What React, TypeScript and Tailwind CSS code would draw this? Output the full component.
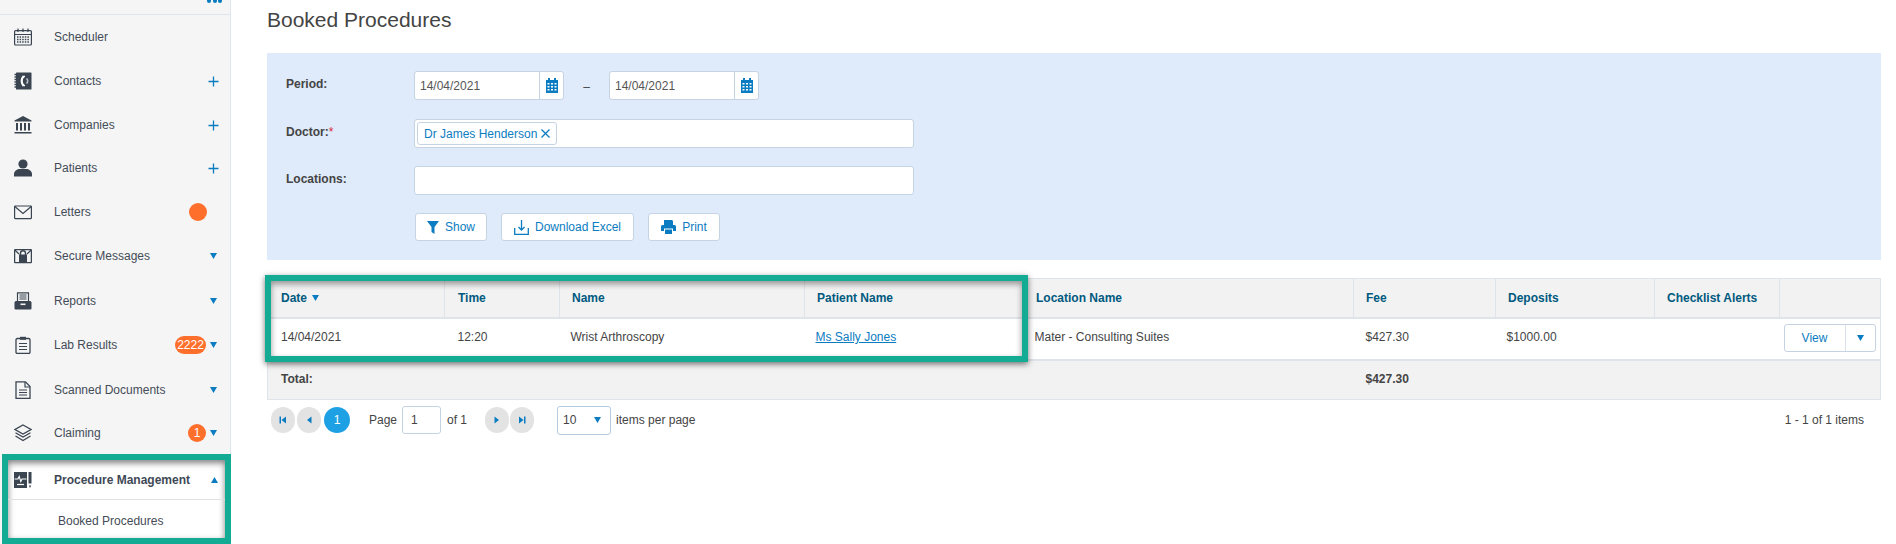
import type { ReactNode } from 'react'

const dark = '#3b4552'
const blue = '#0b7cc1'

function Svg({ children }: { children: ReactNode }) {
  return (
    <svg width="18" height="18" viewBox="0 0 18 18" fill="none" stroke={dark} strokeWidth="1.2">
      {children}
    </svg>
  )
}

const CalendarIcon = () => (
  <Svg>
    <rect x="0.6" y="2.6" width="16.8" height="14.4" rx="1" />
    <path d="M0.6 6.5h16.8M4 0.5v3.5M9 0.5v3.5M14 0.5v3.5" />
    <path strokeWidth="1.4" strokeDasharray="1.5 1.1" d="M3 9h12M3 11.5h12M3 14h12" />
  </Svg>
)

const ContactsIcon = () => (
  <Svg>
    <rect x="2" y="0.5" width="15.5" height="17" rx="0.5" fill={dark} stroke="none" />
    <path stroke={dark} strokeWidth="1.3" d="M0.5 2.5h3M0.5 5h3M0.5 7.5h3M0.5 10h3M0.5 12.5h3M0.5 15h3" />
    <path stroke="#fff" strokeWidth="2.2" d="M9.5 4.5c-2.4 2-2.4 7 0 9" />
    <path stroke="#fff" strokeWidth="1.6" d="M8.5 4.5h2.5M8.5 13.5h2.5" />
    <path stroke="#b9bec6" strokeWidth="1.6" d="M12.5 6.5c1.6 1 1.6 4 0 5" />
  </Svg>
)

const BankIcon = () => (
  <svg width="18" height="18" viewBox="0 0 18 18" fill={dark}>
    <path d="M9 0 L17.5 4.5 V5.5 H0.5 V4.5 Z" />
    <path d="M2 7h2v7.5h-2zM6 7h2v7.5h-2zM10 7h2v7.5h-2zM14 7h2v7.5h-2z" />
    <path d="M0.5 16h17v1.5h-17z" />
  </svg>
)

const PersonIcon = () => (
  <svg width="18" height="18" viewBox="0 0 18 18" fill={dark}>
    <circle cx="9" cy="5" r="4.6" />
    <path d="M0 17.5v-2.5c0-3 3.2-5 6-5h6c2.8 0 6 2 6 5v2.5z" />
  </svg>
)

const MailIcon = () => (
  <Svg>
    <rect x="0.6" y="3" width="16.8" height="12.6" rx="0.5" />
    <path d="M0.8 3.5 L9 10.5 L17.2 3.5" />
  </Svg>
)

const SecureMailIcon = () => (
  <Svg>
    <rect x="0.6" y="2.6" width="16.8" height="13" rx="0.5" strokeWidth="1.3" />
    <path d="M0.8 3 L5 7M17.2 3 L13 7" />
    <rect x="5" y="7.5" width="8" height="7.5" fill={dark} stroke="none" />
    <path d="M6.5 8V6.2a2.5 2.5 0 0 1 5 0V8" strokeWidth="1.4" />
  </Svg>
)

const ReportsIcon = () => (
  <svg width="18" height="18" viewBox="0 0 18 18" fill="none" stroke={dark}>
    <path strokeWidth="1.2" d="M3.5 9V0.8h11V9" />
    <path strokeWidth="1" d="M5.5 3h7M5.5 5h7M5.5 7h7" />
    <path fill={dark} stroke="none" d="M1.5 9h15l1 1.5V16.5a1 1 0 0 1-1 1h-15a1 1 0 0 1-1-1V10.5z" />
    <rect x="6.5" y="11.5" width="5" height="1.6" fill="#f5f5f5" stroke="none" />
  </svg>
)

const ClipboardIcon = () => (
  <Svg>
    <rect x="2" y="2.5" width="14" height="15" rx="1.2" strokeWidth="1.3" />
    <rect x="6" y="0.8" width="6" height="3" fill={dark} stroke="none" />
    <path d="M5 7.5h8M5 10.5h8M5 13.5h8" />
  </Svg>
)

const DocumentIcon = () => (
  <Svg>
    <path strokeWidth="1.3" d="M2 0.8h9.5L16 5.5v12H2z" />
    <path d="M11 1v5h5M5 9h8M5 11.5h8M5 14h8" />
  </Svg>
)

const LayersIcon = () => (
  <Svg>
    <path strokeWidth="1.3" d="M9 1 L17 5.5 L9 10 L1 5.5z" />
    <path strokeWidth="1.3" d="M1.5 8.8 L9 13 L16.5 8.8M1.5 12 L9 16.5 L16.5 12" />
  </Svg>
)

const ProcedureIcon = () => (
  <svg width="18" height="18" viewBox="0 0 18 18" fill="none">
    <rect x="0" y="1" width="13" height="16" fill={dark} />
    <path stroke="#fff" strokeWidth="1.1" d="M0.5 8h3.5l1.2-2.5 1.6 5 1.2-2.5h4.5" />
    <path stroke="#fff" strokeWidth="1.2" d="M3 13.5h7" />
    <path fill={dark} d="M14.5 1h3v11.5h-3zM14.8 14.5h2.4l-1.2 2.5z" />
  </svg>
)

const Plus = () => (
  <svg width="11" height="11" viewBox="0 0 11 11" stroke={blue} strokeWidth="1.3">
    <path d="M5.5 0.5v10M0.5 5.5h10" />
  </svg>
)

const Down = ({ className = '' }: { className?: string }) => (
  <svg width="7" height="6" viewBox="0 0 7 6" fill={blue} className={className}>
    <path d="M0 0h7L3.5 6z" />
  </svg>
)

const navItems = [
  { label: 'Scheduler', icon: <CalendarIcon />, height: 'h-[44px]' },
  { label: 'Contacts', icon: <ContactsIcon />, height: 'h-[44px]', plus: true },
  { label: 'Companies', icon: <BankIcon />, height: 'h-[44px]', plus: true },
  { label: 'Patients', icon: <PersonIcon />, height: 'h-[42px]', plus: true },
  { label: 'Letters', icon: <MailIcon />, height: 'h-[45px]', dot: true },
  { label: 'Secure Messages', icon: <SecureMailIcon />, height: 'h-[44px]', arrow: true },
  { label: 'Reports', icon: <ReportsIcon />, height: 'h-[45px]', arrow: true },
  { label: 'Lab Results', icon: <ClipboardIcon />, height: 'h-[44px]', arrow: true, badge: '2222' },
  { label: 'Scanned Documents', icon: <DocumentIcon />, height: 'h-[45px]', arrow: true },
  { label: 'Claiming', icon: <LayersIcon />, height: 'h-[42px]', arrow: true, badge: '1' },
]

function Sidebar() {
  return (
    <aside className="w-[231px] h-[544px] shrink-0 bg-[#f5f5f5] border-r border-[#dfe5ec]">
      <div className="h-[15px] border-b border-[#dfe5ec] flex justify-end items-start gap-[1.5px] pr-[8px]">
        <span className="w-[4px] h-[3px] rounded-b-full bg-[#0b7cc1]" />
        <span className="w-[4px] h-[3px] rounded-b-full bg-[#0b7cc1]" />
        <span className="w-[4px] h-[3px] rounded-b-full bg-[#0b7cc1]" />
      </div>
      {navItems.map((item) => (
        <div key={item.label} className={`${item.height} flex items-center pl-[14px] text-[#444c58]`}>
          <span className="w-[40px] flex">{item.icon}</span>
          <span>{item.label}</span>
          <span className="ml-auto flex items-center pr-[11px]">
            {item.dot && <span className="w-[18px] h-[18px] rounded-full bg-[#ff6f2c] mr-[12px]" />}
            {item.badge && (
              <span
                className={`h-[18px] rounded-full bg-[#ff6f2c] text-white flex items-center justify-center ${
                  item.badge === '1' ? 'w-[18px]' : 'w-[31px]'
                }`}
              >
                {item.badge}
              </span>
            )}
            {item.plus && <Plus />}
            {item.arrow && <Down className="ml-[4px] mr-[2px]" />}
          </span>
        </div>
      ))}
      {/* highlighted menu group */}
      <div className="ml-[2px] w-[229px] h-[90px] border-[6px] border-[#13ab94] bg-white shadow-[inset_0_3px_6px_rgba(0,0,0,0.5)]">
        <div className="h-[40px] flex items-center pl-[6px] border-b border-[#e1e1e1] text-[#3f4956] font-bold">
          <span className="w-[40px] flex">
            <ProcedureIcon />
          </span>
          <span>Procedure Management</span>
          <svg width="7" height="6" viewBox="0 0 7 6" fill={blue} className="ml-auto mr-[7px]">
            <path d="M0 6h7L3.5 0z" />
          </svg>
        </div>
        <div className="h-[38px] flex items-center pl-[50px] pt-[3px] text-[#444c58]">Booked Procedures</div>
      </div>
    </aside>
  )
}

const CalendarSmall = () => (
  <svg width="12" height="15" viewBox="0 0 12 15" fill={blue}>
    <path d="M2 0h2v2h4V0h2v2h2v13H0V2h2z" />
    <path
      fill="#fff"
      d="M1.5 5h2v1.6h-2zM5 5h2v1.6H5zM8.5 5h2v1.6h-2zM1.5 8h2v1.6h-2zM5 8h2v1.6H5zM8.5 8h2v1.6h-2zM1.5 11h2v1.6h-2zM5 11h2v1.6H5zM8.5 11h2v1.6h-2z"
    />
  </svg>
)

function DateField({ value }: { value: string }) {
  return (
    <div className="w-[150px] h-[29px] flex bg-white border border-[#c5d3e2] rounded-[3px]">
      <input
        readOnly
        defaultValue={value}
        className="w-[125px] pl-[5px] text-[#555] outline-none border-r border-[#c5d3e2] bg-transparent"
      />
      <span className="flex-1 flex items-center justify-center">
        <CalendarSmall />
      </span>
    </div>
  )
}

function FilterButton({ icon, label, width }: { icon: ReactNode; label: string; width: string }) {
  return (
    <button className={`${width} h-[28px] flex items-center justify-center gap-[6px] bg-white border border-[#c5d3e2] rounded-[3px] text-[#0b7cc1]`}>
      {icon}
      {label}
    </button>
  )
}

function FilterPanel() {
  return (
    <section className="h-[207px] bg-[#dfeafa] pt-[18px] pl-[19px]">
      <div className="grid grid-cols-[128px_1fr] grid-rows-[30px_29px_29px_28px] gap-y-[18px]">
        <label className="font-bold text-[#444] pt-[4px]">Period:</label>
        <div className="flex items-start">
          <DateField value="14/04/2021" />
          <span className="w-[45px] pt-[7px] text-center text-[#444]">–</span>
          <DateField value="14/04/2021" />
        </div>
        <label className="font-bold text-[#444] pt-[4px]">
          Doctor:<span className="text-[#d9263c] font-normal">*</span>
        </label>
        <div className="w-[500px] h-[29px] bg-white border border-[#c5d3e2] rounded-[3px] p-[2px]">
          <span className="inline-flex items-center h-[23px] px-[6px] gap-[4px] border border-[#c5d3e2] rounded-[3px] text-[#0b7cc1]">
            Dr James Henderson
            <svg width="9" height="9" viewBox="0 0 9 9" stroke={blue} strokeWidth="1.3">
              <path d="M0.5 0.5l8 8M8.5 0.5l-8 8" />
            </svg>
          </span>
        </div>
        <label className="font-bold text-[#444] pt-[4px]">Locations:</label>
        <div className="w-[500px] h-[29px] bg-white border border-[#c5d3e2] rounded-[3px]" />
        <div />
        <div className="flex gap-[14px] pl-[1px]">
          <FilterButton
            width="w-[72px]"
            label="Show"
            icon={
              <svg width="12" height="13" viewBox="0 0 12 13" fill={blue}>
                <path d="M0 0h12L7.5 6v7l-3-2V6z" />
              </svg>
            }
          />
          <FilterButton
            width="w-[133px]"
            label="Download Excel"
            icon={
              <svg width="15" height="15" viewBox="0 0 15 15" fill="none" stroke={blue} strokeWidth="1.3">
                <path d="M0.7 8v6.3h13.6V8M7.5 0v9.5M4.5 7l3 3 3-3" />
              </svg>
            }
          />
          <FilterButton
            width="w-[72px]"
            label="Print"
            icon={
              <svg width="15" height="14" viewBox="0 0 15 14" fill={blue}>
                <path d="M3 0h8l1 1v4H3z" />
                <path d="M0 6.5a1.5 1.5 0 0 1 1.5-1.5h12A1.5 1.5 0 0 1 15 6.5V11h-3V8.5H3V11H0z" />
                <path d="M4 9.5h7V14H4z" />
              </svg>
            }
          />
        </div>
      </div>
    </section>
  )
}

const headers = ['Date', 'Time', 'Name', 'Patient Name', 'Location Name', 'Fee', 'Deposits', 'Checklist Alerts', '']
const colWidths = ['w-[177px]', 'w-[115px]', 'w-[245px]', 'w-[219px]', 'w-[330px]', 'w-[142px]', 'w-[159px]', 'w-[125px]', 'w-[101px]']

function ResultsTable() {
  return (
    <div className="relative mt-[18px]">
      <table className="w-full table-fixed border-collapse border border-[#dfe4ea]">
        <colgroup>
          {colWidths.map((w, i) => (
            <col key={i} className={w} />
          ))}
        </colgroup>
        <thead>
          <tr className="h-[39px] bg-[#f2f2f2] border-b-2 border-[#dfe4ea]">
            {headers.map((h, i) => (
              <th
                key={i}
                className={`text-left font-bold text-[#00597f] border-l border-[#dfe4ea] ${i < 2 ? 'px-[13px]' : 'px-[12px]'}`}
              >
                {h}
                {h === 'Date' && <Down className="inline ml-[5px] mb-[1px]" />}
              </th>
            ))}
          </tr>
        </thead>
        <tbody>
          <tr className="h-[42px] bg-white text-[#444] border-b-2 border-[#dfe4ea]">
            <td className="px-[13px] pb-[3px]">14/04/2021</td>
            <td className="px-[13px] pb-[3px]">12:20</td>
            <td className="px-[11px] pb-[3px]">Wrist Arthroscopy</td>
            <td className="px-[11px] pb-[3px]">
              <a href="#" className="text-[#0b7cc1] underline">
                Ms Sally Jones
              </a>
            </td>
            <td className="px-[11px] pb-[3px]">Mater - Consulting Suites</td>
            <td className="px-[12px] pb-[3px]">$427.30</td>
            <td className="px-[11px] pb-[3px]">$1000.00</td>
            <td />
            <td className="pl-[4px] pr-0 pb-[1px]">
              <div className="w-[92px] h-[28px] flex bg-white border border-[#c5d3e2] rounded-[3px] text-[#0b7cc1]">
                <span className="w-[61px] flex items-center justify-center border-r border-[#d9e1ea]">View</span>
                <span className="flex-1 flex items-center justify-center">
                  <Down />
                </span>
              </div>
            </td>
          </tr>
        </tbody>
        <tfoot>
          <tr className="h-[40px] bg-[#f2f2f2] font-bold text-[#444]">
            <td colSpan={5} className="px-[13px] pb-[1px]">
              Total:
            </td>
            <td className="px-[12px] pb-[1px]">$427.30</td>
            <td colSpan={3} />
          </tr>
        </tfoot>
      </table>
      {/* annotation frame drawn over the table */}
      <div className="absolute left-[-2px] top-[-3px] w-[763px] h-[87px] border-[6px] border-[#13ab94] shadow-[0_2px_6px_rgba(0,0,0,0.55),inset_0_3px_6px_rgba(0,0,0,0.4)]" />
    </div>
  )
}

function PagerButton({ d }: { d: string }) {
  return (
    <span className="w-[24px] h-[26px] rounded-full bg-[#e3e3e3] flex items-center justify-center">
      <svg width="8" height="8" viewBox="0 0 8 8" fill={blue}>
        <path d={d} />
      </svg>
    </span>
  )
}

function Pagination() {
  return (
    <div className="flex items-center h-[28px] mt-[6px] pl-[4px] text-[#444]">
      <div className="flex gap-[2px]">
        <PagerButton d="M0.5 0.5h1.5v7H0.5zM7 0.5v7L2.5 4z" />
        <PagerButton d="M6.5 0.5v7L2 4z" />
        <span className="ml-[1px] w-[26px] h-[26px] rounded-full bg-[#1ea1e4] text-white flex items-center justify-center">1</span>
      </div>
      <span className="ml-[19px]">Page</span>
      <span className="ml-[5px] w-[39px] h-[28px] bg-white border border-[#c5d3e2] rounded-[3px] flex items-center pl-[8px]">1</span>
      <span className="ml-[6px]">of 1</span>
      <div className="flex gap-[1px] ml-[18px]">
        <PagerButton d="M1.5 0.5v7L6 4z" />
        <PagerButton d="M1 0.5v7L5.5 4zM6 0.5h1.5v7H6z" />
      </div>
      <span className="ml-[23px] w-[54px] h-[29px] bg-white border border-[#b5cbe0] rounded-[3px] flex items-center justify-between pl-[5px] pr-[9px]">
        10
        <Down />
      </span>
      <span className="ml-[5px]">items per page</span>
      <span className="ml-auto pr-[17px]">1 - 1 of 1 items</span>
    </div>
  )
}

export default function App() {
  return (
    <div className="flex h-[544px] overflow-hidden bg-white text-[12px] font-['Liberation_Sans',Arial,sans-serif]">
      <Sidebar />
      <main className="flex-1 pl-[36px] pr-[16px]">
        <h1 className="h-[53px] pt-[7px] text-[21px] leading-[26px] font-normal text-[#444]">Booked Procedures</h1>
        <FilterPanel />
        <ResultsTable />
        <Pagination />
      </main>
    </div>
  )
}
